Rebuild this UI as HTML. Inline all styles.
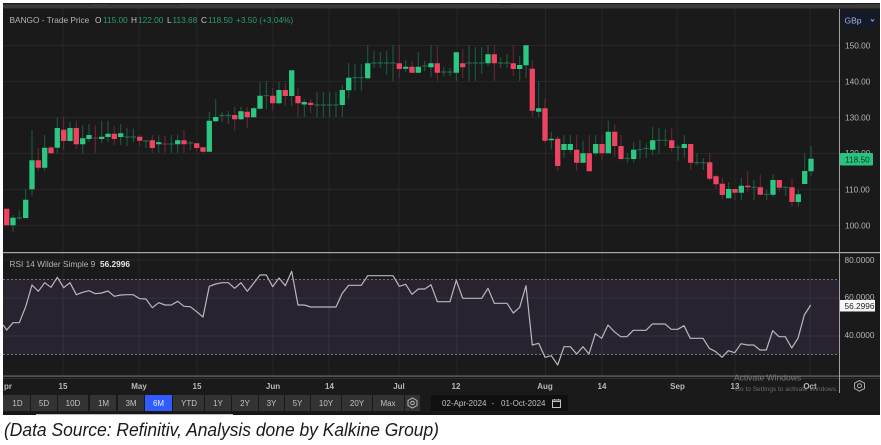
<!DOCTYPE html>
<html>
<head>
<meta charset="utf-8">
<style>
html,body{margin:0;padding:0;background:#fff;width:881px;height:445px;overflow:hidden}
svg{display:block;filter:blur(.3px)}
text{font-family:"Liberation Sans",sans-serif}
</style>
</head>
<body>
<svg width="881" height="445" viewBox="0 0 881 445" xmlns="http://www.w3.org/2000/svg">
<rect width="881" height="445" fill="#fff"/>
<rect x="3" y="3" width="877" height="412" fill="#1a1a1a"/>
<rect x="3" y="4" width="877" height="4.5" fill="#3a3a3a"/>
<path d="M3 4H92M108 4H180M320 4H438M500 4H510M800 4H855" stroke="#222" stroke-width="1"/>
<!-- grid -->
<path d="M3 45.5H839M3 81.5H839M3 117.5H839M3 153.5H839M3 189.5H839M3 225.5H839" stroke="#262626" stroke-width="1"/>
<path d="M63 9V376M139 9V376M197 9V376M273 9V376M329 9V376M399 9V376M457 9V376M545.500 9V376M602 9V376M677 9V376M735 9V376M810 9V376" stroke="#262626" stroke-width="1"/>
<!-- RSI band -->
<rect x="3" y="279.500" width="836" height="75" fill="#292330"/>
<path d="M63 279V354M139 279V354M197 279V354M273 279V354M329 279V354M399 279V354M457 279V354M545.500 279V354M602 279V354M677 279V354M735 279V354M810 279V354M3 298H839M3 336H839" stroke="#35303c" stroke-width="1"/>
<path d="M3 260H839" stroke="#262626" stroke-width="1"/>
<path d="M3 279.500H839M3 354.500H839" stroke="#77737c" stroke-width="1" stroke-dasharray="2 2"/>
<!-- wicks green -->
<path fill="none" stroke="#1c5f43" stroke-width="1" d="M13 215V231.700M19.300 210.700V220M25.700 189.300V218M32 130V195.700M44.700 135V170.700M57.300 117.300V153.300M70 121.700V141.700M82.700 125V153.300M89 124V141.700M101.700 120.700V143M108 120.700V142M120.700 124V145M127 128V146M133.300 128.700V142M146 140V148M158.700 135V153M171.300 135V153M177.700 135V153M190.300 141V150M209.300 111.700V151.700M215.700 99V122M222 112V122M228.300 111V124M241 107V120M253.700 107V117M260 82V108.700M266.300 81V109M279 82V104M291.700 70.300V106M304.300 99V117M317 92V117M323.300 92V117M329.700 92V117M336 92V117M342.300 85V117M348.700 63V99M355 64V91M361.300 64V91M367.700 45V78M374 51V68M380.300 52V68M386.700 51V75M393 45V81M405.700 60V72M418.300 52V73M424.700 61V71M431 45V77M443.700 67V76M450 68V76M456.300 52V81M469 45V81M475.300 47V81M481.700 47V74M488 45V66M500.700 57V68M507 54V68M519.700 56V81M526 45V78M538.700 81V117M551.300 131.700V149.300M564 135V158M570.300 135V153M583 140.700V162.700M595.700 135V155M608.300 120.700V153.300M627.300 153V163M633.700 142V162.700M640 140V159M646.300 143V158M652.700 126.700V155.300M659 128V153.300M665.300 129V146M678 145V160.700M684.300 135V157.700M697 153.300V165.300M703.300 158V170M728.700 182V198.300M741.300 177.700V200M754 180V200M766.700 190V200M773 174.300V196.700M785.700 186.700V196M798.300 189.300V206.700M804.700 153.300V184M811 146V176"/>
<!-- dojis green -->
<path fill="none" stroke="#1f6a4a" stroke-width="1.200" d="M16.600 218H22M130 0M124.300 137H129.700M130.600 137H136M143.300 141H148.700M168.600 144H174M187.600 143H193M219.300 115.500H224.700M225.600 115.500H231M263.600 95.700H269M301.600 103H307M314.300 105H319.700M320.600 105H326M327 105H332.400M333.300 105H338.700M352.300 77.700H357.700M358.600 77.700H364M371.300 63H376.700M377.600 63H383M384 63H389.400M390.300 63H395.700M422 66H427.400M441 72H446.400M447.300 72H452.700M466.300 63H471.700M472.600 63H478M479 63H484.400M498 63H503.400M504.300 63H509.700M694.300 0M627.300 0M624.600 158.300H630M637.300 149.700H642.700M643.600 148.500H649M656.300 140.300H661.700M662.600 140.300H668M675.300 147.300H680.700M694.300 162.700H699.700M700.600 162.700H706M751.300 187.300H756.700M764 194.300H769.400M783 187.300H788.400"/>
<!-- wicks red -->
<path fill="none" stroke="#6d2639" stroke-width="1" d="M38.300 148V170.700M51 146V153.300M63.700 116.700V150M76.300 120.700V149M95.300 125V153.300M114.300 126V145M139.700 135V146M152.300 135V153M165 136V153M184 130V153M196.700 143V151M203 147V153M234.700 107V131M247.300 107V128M272.700 88V111M285.300 83V106M298 88V117M310.700 99V113M399.300 45V78M412 61V73M437.300 45V81M462.700 49V78M494.300 45V81M513.300 45V76M532.300 60V117M545 99V143M557.700 136V171M576.700 135V171M589.300 135V171M602 135V160.700M614.700 124.300V156.700M621 135V160.700M671.700 128V151.700M690.700 144V170M709.700 153V180.700M716 175V189M722.300 178V199.300M735 189V200M747.700 171V191.700M760.300 174.300V194.700M779.300 180V191.700M792 178.300V206.700"/>
<path fill="none" stroke="#7a2a40" stroke-width="1.200" d="M92.600 138H98M162.300 144H167.700"/>
<!-- bodies green -->
<path fill="none" stroke="#2ac882" stroke-width="5.300" d="M13 217.700V225.300M25.700 199.700V218M32 160.300V189.300M44.700 147.700V167.700M57.300 128V147.700M70 128V141M82.700 138.300V144.300M89 135V139M101.700 136.700V139M108 133.700V137M120.700 133.300V137M158.700 142.300V144.300M177.700 140.300V144.300M209.300 120.700V151.700M215.700 117V121.300M241 111.300V119.300M253.700 108.300V117.300M260 95.700V108.700M279 90V103.300M291.700 70.300V96M304.300 102V104.500M342.300 90V105M348.700 77.700V90.300M367.700 63.300V78.300M405.700 66.700V68.700M418.300 66.700V72.700M431 63.300V67.300M456.300 52.300V72.700M488 54.300V63.300M519.700 65V69M526 45.300V65.300M538.700 108.300V111.700M551.300 138.700V140.300M564 144V150M570.300 144V150M583 153.300V162.700M595.700 144V153.300M608.300 131.700V153.300M633.700 149.700V159M652.700 140.300V149.700M684.300 144V148M728.700 189V198.300M741.300 185.700V192.700M773 180V194.700M798.300 194.300V202M804.700 171V184M811 158.700V171.300"/>
<!-- bodies red -->
<path fill="none" stroke="#ef4362" stroke-width="5.300" d="M6.700 208.700V225.300M38.300 160.300V167.700M51 147.500V153.300M63.700 129.700V141M76.300 128V144.300M114.300 133.700V139M139.700 136.700V140.700M152.300 140.300V148M184 140.300V144.300M196.700 143.300V148M203 147.300V151.700M234.700 115V119.300M247.300 111.700V117.300M272.700 95.700V103.300M285.300 90V96M298 96V103.300M310.700 102.700V105M399.300 63.300V69M412 66.700V72.700M437.300 63.300V72.700M462.700 63.300V67.300M494.300 54.300V63.300M513.300 63.300V69M532.300 68.700V110.700M545 108.300V140.700M557.700 138.700V166M576.700 149.700V162.700M589.300 153.300V171.300M602 144V153.300M614.700 131.700V146M621 146V159M671.700 140.300V148M690.700 144V162.700M709.700 162.300V178.700M716 176.300V184.300M722.300 183.700V195M735 189V192.700M747.700 185.700V187.300M760.300 187.300V194.700M779.300 180V187.700M792 187.300V202"/>
<!-- RSI line -->
<polyline fill="none" stroke="#b9b7bc" stroke-width="1.200" stroke-linejoin="round" points="3.300,325 6.700,330 13,322.700 19.300,322.700 25.700,306.700 32,285 38.300,291.300 44.700,282.700 51,287.300 57.300,277.300 63.700,287.700 70,282.700 76.300,294.700 82.700,292.300 89,290.700 95.300,293.700 101.700,293 108,291 114.300,296.300 120.700,295 127,294.700 133.300,294.700 139.700,298.700 146,299 152.300,307.700 158.700,302.700 165,305 171.300,305 177.700,301.300 184,306.300 190.300,306.700 196.700,311.700 203,317 209.300,286.300 215.700,284 222,282.700 228.300,282.700 234.700,288.300 241,282.700 247.300,291.300 253.700,283.300 260,275 266.300,275 272.700,286.700 279,278 285.300,285.700 291.700,271.300 298,305 304.300,305 310.700,307 317,307 323.300,307 329.700,307 336,307 342.300,293.300 348.700,285.300 355,285.300 361.300,285.300 367.700,275.700 374,275.700 380.300,275.700 386.700,275.700 393,275.700 399.300,286.300 405.700,284.300 412,294.300 418.300,289 424.700,289 431,284.700 437.300,301.700 443.700,301.700 450,301.700 456.300,280.300 462.700,298.300 469,298.300 475.300,298.300 481.700,298.300 488,288.300 494.300,303.300 500.700,303.300 507,303.300 513.300,313 519.700,307.300 526,285.700 532.300,345 538.700,343.300 545,357.300 551.300,355.700 557.700,365 564,346.700 570.300,346.700 576.700,354 583,346.700 589,354 595.300,333.700 601.700,338.300 608,325 614.300,331.700 620.700,336.700 627,336.700 633.300,330.300 639.700,330.300 646,330.300 652.300,324 658.700,324 665,324 671.300,329.300 677.700,329.300 684,325.700 690.300,338.300 696.700,338.300 703,338.300 709.300,348.300 715.700,351.700 722,357.300 728.300,350.700 734.700,352.700 741,343.700 747.300,345 753.700,345 760,350 766.300,350 772.700,330.700 779,336.700 785.300,336.700 791.700,348 798,338.300 804.300,315 810.700,305"/>
<!-- separators -->
<rect x="3" y="252" width="877" height="1.200" fill="#a8a8a8"/>
<rect x="3" y="375.500" width="877" height="1.200" fill="#6a6a6a"/>
<rect x="3" y="378" width="877" height=".8" fill="#333"/>
<rect x="839" y="9" width="1" height="384" fill="#a0a0a0"/>
<rect x="3" y="412" width="877" height="3" fill="#161616"/>
<rect x="36" y="414" width="197" height="1" fill="#bbb"/>
<!-- header text -->
<g font-size="8.300">
<text x="9.500" y="22.800" fill="#b5b5b5">BANGO - Trade Price</text>
<text x="95" y="22.800" fill="#c5c5c5">O</text><text x="103" y="22.800" fill="#2a9d68">115.00</text>
<text x="131" y="22.800" fill="#c5c5c5">H</text><text x="138" y="22.800" fill="#2a9d68">122.00</text>
<text x="167" y="22.800" fill="#c5c5c5">L</text><text x="172.500" y="22.800" fill="#2a9d68">113.68</text>
<text x="201" y="22.800" fill="#c5c5c5">C</text><text x="208" y="22.800" fill="#2a9d68">118.50</text>
<text x="236" y="22.800" fill="#2a9d68">+3.50 (+3.04%)</text>
<text x="9.500" y="267" fill="#b5b5b5">RSI 14 Wilder Simple 9</text>
<text x="100" y="267" fill="#e6e6e6" font-weight="bold">56.2996</text>
</g>
<!-- GBp -->
<rect x="843" y="12" width="34" height="16" rx="2" fill="#131a2b"/>
<text x="844.500" y="23.500" font-size="8.500" fill="#a9b4d2">GBp</text>
<path d="M871 19.500l1.500 1.500 1.500-1.500" fill="none" stroke="#a9b4d2" stroke-width="1"/>
<!-- y axis labels -->
<g font-size="8.300" fill="#b5b5b5">
<text x="845" y="48.500">150.00</text>
<text x="845" y="84.500">140.00</text>
<text x="845" y="120.500">130.00</text>
<text x="845" y="156">120.00</text>
<text x="845" y="192.500">110.00</text>
<text x="845" y="228.500">100.00</text>
<text x="844.500" y="263">80.0000</text>
<text x="844.500" y="300">60.0000</text>
<text x="844.500" y="338">40.0000</text>
</g>
<rect x="840" y="153" width="33" height="12.500" rx="1" fill="#27c47f"/>
<text x="845" y="162.500" font-size="8.300" fill="#10331f">118.50</text>
<rect x="840" y="300" width="35" height="11.500" fill="#f6f6f6"/>
<text x="844.500" y="309" font-size="8.300" fill="#222">56.2996</text>
<!-- x axis labels -->
<g font-size="8" fill="#b8b8b8" font-weight="bold" text-anchor="middle">
<text x="8" y="389">pr</text>
<text x="63" y="389">15</text>
<text x="139" y="389">May</text>
<text x="197" y="389">15</text>
<text x="273" y="389">Jun</text>
<text x="329.500" y="389">14</text>
<text x="399" y="389">Jul</text>
<text x="456" y="389">12</text>
<text x="545" y="389">Aug</text>
<text x="602" y="389">14</text>
<text x="677.500" y="389">Sep</text>
<text x="735" y="389">13</text>
<text x="810" y="389">Oct</text>
</g>
<!-- gear -->
<path d="M859.500 380.500l5 2.700v5.300l-5 2.700-5-2.700v-5.300z" fill="none" stroke="#aaa" stroke-width="1"/>
<circle cx="859.500" cy="385.800" r="2" fill="none" stroke="#aaa" stroke-width="1"/>
<!-- buttons -->
<g fill="#333">
<rect x="3" y="395" width="27" height="16"/>
<rect x="31" y="395" width="26" height="16"/>
<rect x="58" y="395" width="30" height="16"/>
<rect x="90" y="395" width="26" height="16"/>
<rect x="118" y="395" width="26" height="16"/>
<rect x="173" y="395" width="31" height="16"/>
<rect x="205" y="395" width="26" height="16"/>
<rect x="232" y="395" width="26" height="16"/>
<rect x="259" y="395" width="25" height="16"/>
<rect x="285" y="395" width="25" height="16"/>
<rect x="311" y="395" width="30" height="16"/>
<rect x="342" y="395" width="30" height="16"/>
<rect x="373" y="395" width="31" height="16"/>
<rect x="405" y="395" width="15" height="16"/>
</g>
<rect x="145" y="395" width="27" height="16" fill="#2f5bff"/>
<g font-size="8" fill="#c2c2c2" text-anchor="middle">
<text x="17.500" y="406">1D</text>
<text x="44" y="406">5D</text>
<text x="73" y="406">10D</text>
<text x="103.500" y="406">1M</text>
<text x="131" y="406">3M</text>
<text x="158.500" y="406" fill="#e8ecff">6M</text>
<text x="189" y="406">YTD</text>
<text x="218" y="406">1Y</text>
<text x="245" y="406">2Y</text>
<text x="271.500" y="406">3Y</text>
<text x="297.500" y="406">5Y</text>
<text x="326" y="406">10Y</text>
<text x="357" y="406">20Y</text>
<text x="388" y="406">Max</text>
</g>
<path d="M412.500 398l4.500 2.500v5l-4.500 2.500-4.500-2.500v-5z" fill="none" stroke="#bbb" stroke-width="1"/>
<circle cx="412.500" cy="403" r="1.800" fill="none" stroke="#bbb" stroke-width="1"/>
<!-- date box -->
<rect x="431" y="395" width="137" height="16" fill="#101010"/>
<text x="442" y="406" font-size="8" fill="#c2c2c2">02-Apr-2024</text>
<text x="491.500" y="406" font-size="8" fill="#c2c2c2">-</text>
<text x="501" y="406" font-size="8" fill="#c2c2c2">01-Oct-2024</text>
<rect x="552.500" y="400" width="8" height="7.500" fill="none" stroke="#c2c2c2" stroke-width="1"/>
<path d="M552.500 401.500h8M554.500 399v1.500M558.500 399v1.500" stroke="#c2c2c2" stroke-width="1" fill="none"/>
<!-- activate windows -->
<text x="734" y="380.500" font-size="8.500" fill="#7a7a7a">Activate Windows</text>
<text x="735" y="391" font-size="6.500" fill="#6a6a6a">Go to Settings to activate Windows.</text>
<!-- caption -->
<text x="4" y="436" font-size="18" font-style="italic" fill="#1a1a1a" textLength="435" lengthAdjust="spacingAndGlyphs">(Data Source: Refinitiv, Analysis done by Kalkine Group)</text>
</svg>
</body>
</html>
